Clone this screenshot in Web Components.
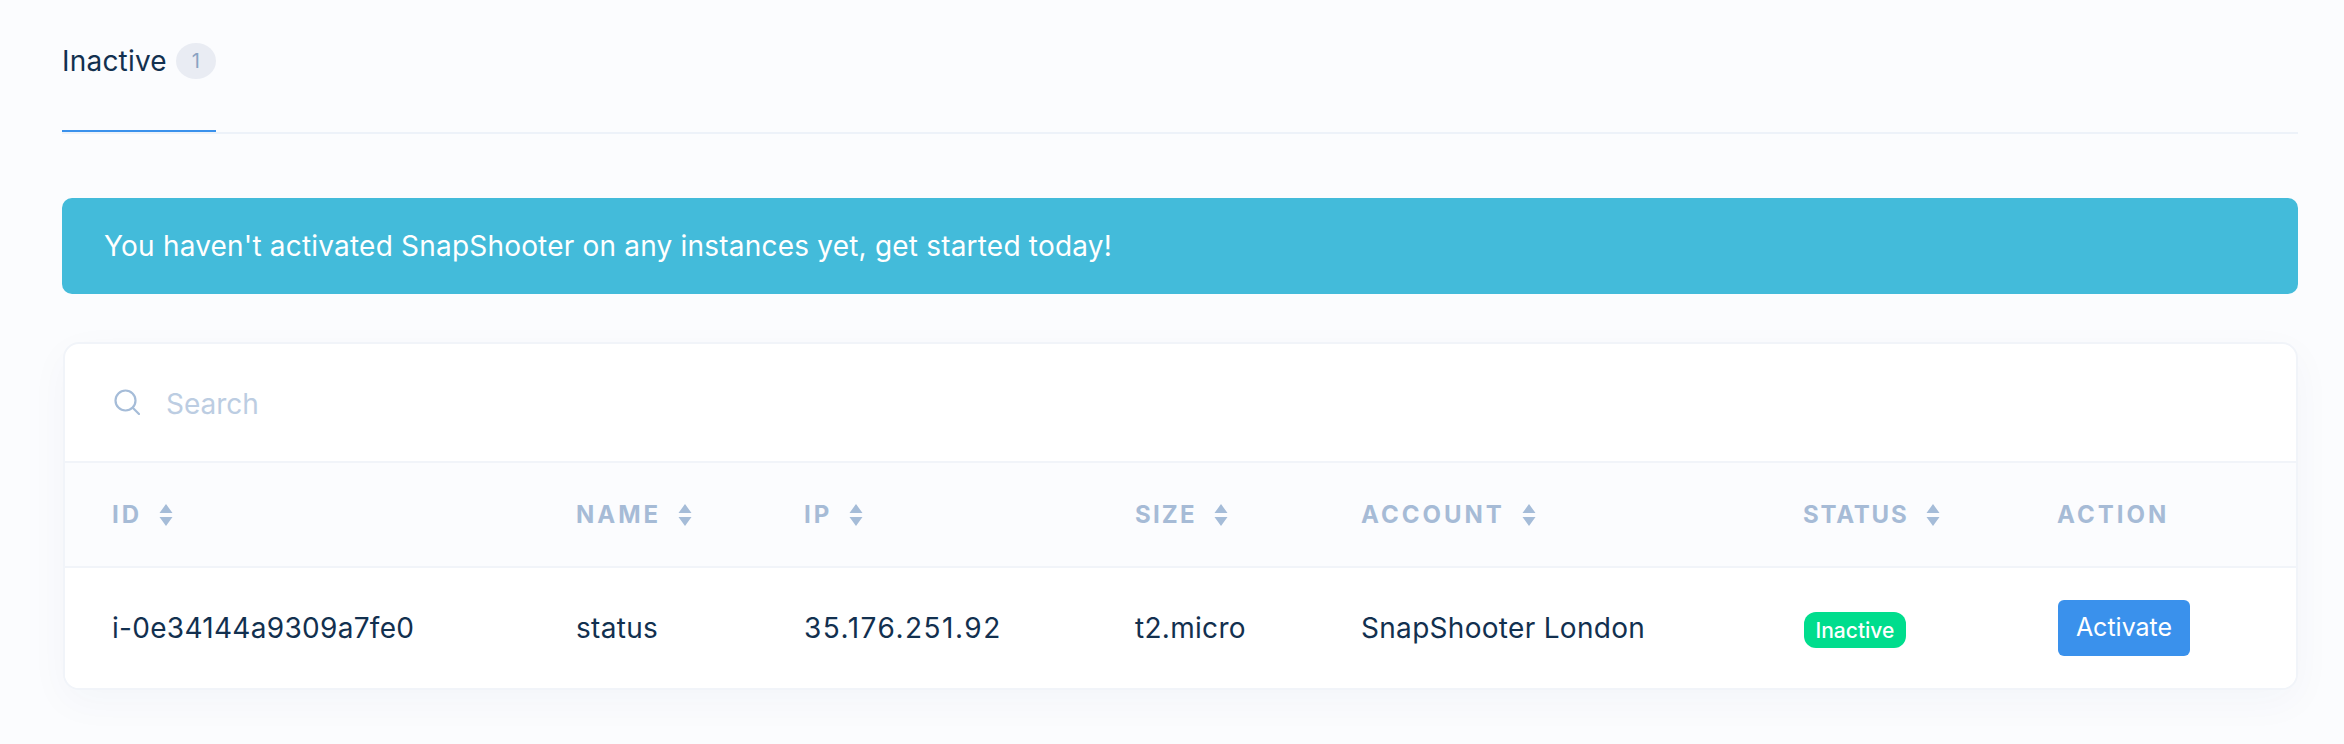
<!DOCTYPE html>
<html>
<head>
<meta charset="utf-8">
<title>Instances</title>
<style>
  html, body { margin: 0; height: 100%; }
  body {
    background: #fbfcfe;
    color: #12304f;
    font-family: "Inter", "Noto Sans", sans-serif;
    overflow: hidden;
  }
  main { display: block; padding: 0 46px 0 62px; }
</style>
</head>
<body>
<main>
  <tab-bar>
    <tab-item count="1">Inactive</tab-item>
  </tab-bar>
  <info-alert>You haven't activated SnapShooter on any instances yet, get started today!</info-alert>
  <instance-card>
    <search-box slot="search" placeholder="Search"></search-box>
    <table-row head>
      <head-cell sort>ID</head-cell>
      <head-cell sort>NAME</head-cell>
      <head-cell sort>IP</head-cell>
      <head-cell sort style="letter-spacing: 2.2px">SIZE</head-cell>
      <head-cell sort>ACCOUNT</head-cell>
      <head-cell sort style="letter-spacing: 1.8px">STATUS</head-cell>
      <head-cell>ACTION</head-cell>
    </table-row>
    <table-row>
      <span>i-0e34144a9309a7fe0</span>
      <span>status</span>
      <span style="letter-spacing: 1.5px">35.176.251.92</span>
      <span>t2.micro</span>
      <span>SnapShooter London</span>
      <status-pill>Inactive</status-pill>
      <action-button>Activate</action-button>
    </table-row>
  </instance-card>
</main>

<script>
// small helper, every element gets an open shadow root with its own style
class Base extends HTMLElement {
  constructor() {
    super();
    this.attachShadow({ mode: 'open' });
  }
  connectedCallback() {
    this.shadowRoot.innerHTML = this.render();
  }
}

class TabBar extends Base {
  render() {
    return `<style>
      :host { display: flex; height: 134px; box-sizing: border-box; border-bottom: 2px solid #edf2f9; }
    </style><slot></slot>`;
  }
}

class TabItem extends Base {
  render() {
    return `<style>
      :host { display: block; height: 132px; box-sizing: border-box; padding-top: 43px; border-bottom: 2px solid #3a91ec; }
      .in { display: flex; align-items: center; font-size: 28px; line-height: 36px; height: 36px; letter-spacing: .2px; }
      b { font-weight: 400; margin-left: 9px; width: 40px; height: 36px; border-radius: 50%; background: #e9ecf3; color: #8aa3c2; font-size: 20px; display: flex; align-items: center; justify-content: center; }
    </style><div class="in"><slot></slot><b>${this.getAttribute('count')}</b></div>`;
  }
}

class InfoAlert extends Base {
  render() {
    return `<style>
      :host { display: flex; align-items: center; margin-top: 64px; height: 96px; padding: 0 42px; box-sizing: border-box; background: #43bbda; color: #fff; border-radius: 10px; font-size: 28px; letter-spacing: .2px; }
    </style><slot></slot>`;
  }
}

class InstanceCard extends Base {
  render() {
    return `<style>
      :host { display: block; margin: 48px 0 0 1px; background: #fff; border: 2px solid #f1f4f9; border-radius: 16px; box-shadow: 0 12px 40px rgba(40,70,120,.035); overflow: hidden; }
    </style><slot name="search"></slot><slot></slot>`;
  }
}

class SearchBox extends Base {
  render() {
    return `<style>
      :host { display: flex; align-items: center; height: 117px; box-sizing: border-box; padding-left: 49px; }
      svg { width: 26px; height: 26px; margin-right: 26px; margin-top: -2px; }
      span { color: #bccde2; font-size: 28px; margin-top: 2px; }
    </style>
    <svg viewBox="0 0 26 26" fill="none" stroke="#a5bcd8" stroke-width="2.2" stroke-linecap="round">
      <circle cx="11.5" cy="11.5" r="10"/><path d="M19 19l6 6"/>
    </svg><span>${this.getAttribute('placeholder')}</span>`;
  }
}

class TableRow extends Base {
  render() {
    const head = this.hasAttribute('head');
    return `<style>
      :host { display: grid; grid-template-columns: 464px 228px 331px 226px 442px 254px 1fr; align-items: center; box-sizing: border-box;
        padding-left: 47px; border-top: 2px solid #f1f4f9; font-size: 28px; letter-spacing: .3px;
        height: ${head ? 105 : 122}px; background: ${head ? '#fbfcfe' : '#fff'}; }
    </style><slot></slot>`;
  }
}

class HeadCell extends Base {
  render() {
    const arrows = this.hasAttribute('sort') ? `<svg viewBox="0 0 14 22" fill="#a5bcd8"><path d="M7 0l6.5 9H.5zM7 22L.5 13h13z"/></svg>` : '';
    return `<style>
      :host { display: flex; align-items: center; color: #a6bbd6; font-size: 24px; font-weight: 700; letter-spacing: 3px; }
      svg { width: 14px; height: 22px; margin-left: 17px; }
    </style><slot></slot>${arrows}`;
  }
}

class StatusPill extends Base {
  render() {
    return `<style>
      :host { display: inline-flex; justify-self: start; align-items: center; height: 36px; margin: 4px 0 0 1px; padding: 0 11.5px; background: #00dd8d; color: #fff; border-radius: 12px; font-size: 21px; font-weight: 500; letter-spacing: 0; }
    </style><slot></slot>`;
  }
}

class ActionButton extends Base {
  render() {
    return `<style>
      :host { display: inline-flex; justify-self: start; align-items: center; justify-content: center; box-sizing: border-box; width: 132px; height: 56px; margin-left: 1px; padding-bottom: 2px; background: #3a91ec; color: #fff; border-radius: 6px; font-size: 25px; letter-spacing: 0; }
    </style><slot></slot>`;
  }
}

customElements.define('tab-bar', TabBar);
customElements.define('tab-item', TabItem);
customElements.define('info-alert', InfoAlert);
customElements.define('instance-card', InstanceCard);
customElements.define('search-box', SearchBox);
customElements.define('table-row', TableRow);
customElements.define('head-cell', HeadCell);
customElements.define('status-pill', StatusPill);
customElements.define('action-button', ActionButton);
</script>
</body>
</html>
